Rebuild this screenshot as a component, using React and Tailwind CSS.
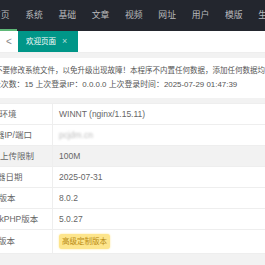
const navItems = ["首页", "系统", "基础", "文章", "视频", "网址", "用户", "模版", "生成"];

const rows = [
  { label: "服务器环境", shift: "ml-[-26px]", value: "WINNT (nginx/1.15.11)" },
  { label: "服务器IP/端口", shift: "ml-[-21px]", value: "blur" },
  { label: "最大上传限制", shift: "ml-[-17px]", value: "100M", hover: true },
  { label: "服务器日期", shift: "ml-[-20px]", value: "2025-07-31" },
  { label: "PHP版本", shift: "ml-[-19px]", value: "8.0.2" },
  { label: "ThinkPHP版本", shift: "ml-[-17px]", value: "5.0.27" },
  { label: "程序版本", shift: "ml-[-19px]", value: "badge", tall: true },
];

function Value({ value }) {
  if (value === "blur") {
    return <span className="text-[#bbb] blur-[1px]">pcjdm.cn</span>;
  }
  if (value === "badge") {
    return (
      <span className="inline-flex h-[15px] items-center rounded-[3px] bg-[#fde58c] px-[3px] text-[7.5px] text-[#b98a12] shadow-[0_0_2px_#fde58c]">
        高级定制版本
      </span>
    );
  }
  return <span>{value}</span>;
}

export default function App() {
  return (
    <div className="h-[265px] w-[265px] overflow-hidden bg-[#f2f2f2] font-['Liberation_Sans','Noto_Sans_CJK_SC',sans-serif]">
      {/* top nav */}
      <div className="flex h-[31px] bg-[#23262e] ml-[-16px]">
        {navItems.map((item, i) => (
          <div
            key={item}
            className={`flex w-[33.3px] shrink-0 items-center justify-center text-[8.8px] text-[#b9babd] ${
              i === 0 ? "border-b-2 border-[#5fb878] pt-[2px]" : ""
            }`}
          >
            {item}
          </div>
        ))}
      </div>

      {/* tabs */}
      <div className="flex h-[22px] border-b border-[#eeeeee] bg-white">
        <div className="flex w-[18px] items-center justify-center text-[10px] text-[#888]">
          &lt;
        </div>
        <div className="flex w-[60px] items-center gap-[6px] bg-[#009688] pl-[8px] text-[7.5px] text-white">
          <span>欢迎页面</span>
          <span className="text-[9px] text-[#b3ded9]">×</span>
        </div>
      </div>

      {/* notice */}
      <div className="mt-[5px] overflow-hidden whitespace-nowrap bg-white py-[6px] text-[7.5px] leading-[14px] text-[#555]">
        <div className="ml-[-5px]">
          不要修改系统文件，以免升级出现故障！本程序不内置任何数据，添加任何数据均由用户自行负责
        </div>
        <div className="ml-[-15px] text-[7.9px]">
          登录次数：15 上次登录IP：0.0.0.0 上次登录时间：2025-07-29 01:47:39
        </div>
      </div>

      {/* info table */}
      <div className="mt-[5px] border-t border-[#eeeeee] bg-white text-[8.5px] text-[#666]">
        {rows.map((row) => (
          <div
            key={row.label}
            className={`flex border-b border-[#eeeeee] ${row.tall ? "h-[24px]" : "h-[21px]"} ${
              row.hover ? "bg-[#f2f2f2]" : ""
            }`}
          >
            <div className="flex w-[53px] shrink-0 items-center overflow-hidden whitespace-nowrap border-r border-[#eeeeee]">
              <span className={row.shift}>{row.label}</span>
            </div>
            <div className="flex items-center whitespace-nowrap pl-[6px]">
              <Value value={row.value} />
            </div>
          </div>
        ))}
      </div>
    </div>
  );
}
